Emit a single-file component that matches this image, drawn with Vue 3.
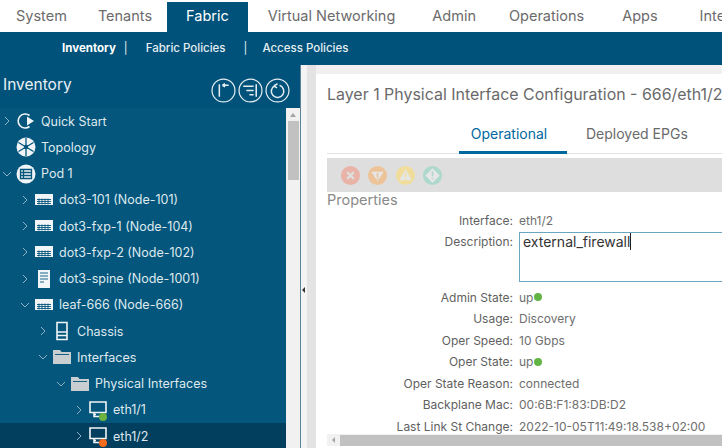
<template>
  <div class="page">
    <nav class="tabs">
      <a v-for="t in tabs" :key="t.name" class="tab" :class="{ active: t.name === 'Fabric' }" :style="{ marginRight: t.gap + 'px' }">{{ t.name }}</a>
    </nav>
    <div class="subnav">
      <a class="sub current">Inventory</a><span class="pipe first">|</span>
      <a class="sub">Fabric Policies</a><span class="pipe">|</span>
      <a class="sub">Access Policies</a>
    </div>

    <div class="main">
      <aside class="sidebar">
        <div class="side-head">
          <span class="side-title">Inventory</span>
          <div class="side-tools">
            <svg viewBox="0 0 24 24" class="tool"><circle cx="12" cy="12" r="11" /><path d="M8 6v12M11 7h6M11 7l2.500-1.500M11 7l2.500 1.500" /></svg>
            <svg viewBox="0 0 24 24" class="tool"><circle cx="12" cy="12" r="11" /><path d="M5 8h10M8 12h7M11 16h4M17.500 6v12" /></svg>
            <svg viewBox="0 0 24 24" class="tool"><circle cx="12" cy="12" r="11" /><path d="M9 7.500a6 6 0 1 0 5-.5M8.500 7.500l3.500-2M8.500 7.500l3 2" /></svg>
          </div>
        </div>
        <div class="side-body">
          <ul class="tree">
            <li v-for="r in rows" :key="r.label" class="row" :class="{ selected: r.selected }" :style="{ paddingLeft: 2 + r.level * 18 + 'px' }">
              <svg viewBox="0 0 10 10" class="chev" :class="{ none: !r.chev }">
                <path v-if="r.chev === 'open'" d="M1 3l4 4 4-4" />
                <path v-else-if="r.chev" d="M3 1l4 4-4 4" />
              </svg>
              <span class="ico">
                <svg v-if="r.icon === 'start'" viewBox="0 0 20 20"><path class="line" d="M13.500 4.500a7 7 0 1 0 0 11" /><path class="fill" d="M11 5.500l7 4.500-7 4.500z" /></svg>
                <svg v-else-if="r.icon === 'topo'" viewBox="0 0 20 20"><circle class="fill" cx="10" cy="10" r="9.500" /><path class="cut" d="M10 1v18M2.500 5.500l15 9M17.500 5.500l-15 9" /><circle class="dot" cx="10" cy="10" r="2.200" /></svg>
                <svg v-else-if="r.icon === 'pod'" viewBox="0 0 20 20"><circle class="fill" cx="10" cy="10" r="9.500" /><path class="cut" d="M4.500 5.500h11v9h-11zM4.500 8.500h11M4.500 11.500h11M7.500 5.500v9" /></svg>
                <svg v-else-if="r.icon === 'leaf'" viewBox="0 0 20 20"><path class="fill" d="M1 4h18v11H1z" /><path class="cut thin" d="M3 9.500h14M3 11.500h14M3 13.500h14M5 8.500v6M8 8.500v6M11 8.500v6M14 8.500v6" /></svg>
                <svg v-else-if="r.icon === 'spine'" viewBox="0 0 20 20"><path class="fill" d="M4 1h12v18H4z" /><path class="cut thin" d="M6 4h8M6 7h8M6 10h8M6 13h4" /></svg>
                <svg v-else-if="r.icon === 'chassis'" viewBox="0 0 20 20"><path class="line" d="M5 1.500h10v17H5zM5 11h10M5 14.500h10" /></svg>
                <svg v-else-if="r.icon === 'folder'" viewBox="0 0 20 20"><path class="folder" d="M1 3h7l1.500 2H19v12H1z" /><path class="cut thin" d="M3 7.500h14" /></svg>
                <svg v-else viewBox="0 0 20 20"><path class="line" d="M2 2h16v10.500H2zM6 12.500v4h5M6 14.500h2" /></svg>
                <i v-if="r.status" class="status" :class="r.status"></i>
              </span>
              <span class="row-label">{{ r.label }}</span>
            </li>
          </ul>
          <div class="vscroll">
            <span class="vup"></span>
            <span class="vthumb"></span>
          </div>
        </div>
      </aside>

      <div class="splitter"><span class="split-arrow"></span></div>

      <section class="panel">
        <h1 class="panel-title">Layer 1 Physical Interface Configuration - 666/eth1/2</h1>
        <div class="panel-tabs">
          <a class="ptab on">Operational</a>
          <a class="ptab">Deployed EPGs</a>
        </div>
        <div class="toolbar">
          <svg viewBox="0 0 22 22" class="fault"><circle cx="11" cy="11" r="10" fill="#e9b3a8" /><path d="M7.500 7.500l7 7M14.500 7.500l-7 7" stroke="#dedede" stroke-width="2.400" /></svg>
          <svg viewBox="0 0 22 22" class="fault"><circle cx="11" cy="11" r="10" fill="#edc39a" /><path d="M4.500 7h13l-6.500 10z" fill="#e6e6e6" /><path d="M11 8.500v4.500M11 14v1.500" stroke="#edc39a" stroke-width="1.600" /></svg>
          <svg viewBox="0 0 22 22" class="fault"><circle cx="11" cy="11" r="10" fill="#f0dd9c" /><path d="M11 4.500l6.500 11.500h-13z" fill="#e6e6e6" /><path d="M11 8v4.500M11 13.500V15" stroke="#f0dd9c" stroke-width="1.600" /></svg>
          <svg viewBox="0 0 22 22" class="fault"><circle cx="11" cy="11" r="10" fill="#aed8ce" /><path d="M11 3.500l7.500 7.500-7.500 7.500-7.500-7.500z" fill="#e6e6e6" /><path d="M11 6.500v5.500M11 13.500V15" stroke="#aed8ce" stroke-width="1.600" /></svg>
        </div>
        <div class="props-title">Properties</div>
        <div class="form">
          <template v-for="f in fields" :key="f.label">
            <label class="flabel">{{ f.label }}:</label>
            <div v-if="f.box" class="fbox"><span class="caret">{{ f.value }}</span></div>
            <div v-else class="fvalue">{{ f.value }}<i v-if="f.up" class="updot"></i></div>
          </template>
        </div>
        <div class="hscroll">
          <span class="hleft"></span>
          <span class="hthumb"></span>
        </div>
      </section>
    </div>
  </div>
</template>

<script setup>
const tabs = [
  { name: 'System', gap: 31 },
  { name: 'Tenants', gap: 15 },
  { name: 'Fabric', gap: 20 },
  { name: 'Virtual Networking', gap: 37 },
  { name: 'Admin', gap: 33 },
  { name: 'Operations', gap: 38 },
  { name: 'Apps', gap: 42 },
  { name: 'Inte', gap: 0 },
]

const rows = [
  { label: 'Quick Start', level: 0, chev: 'closed', icon: 'start' },
  { label: 'Topology', level: 0, icon: 'topo' },
  { label: 'Pod 1', level: 0, chev: 'open', icon: 'pod' },
  { label: 'dot3-101 (Node-101)', level: 1, chev: 'closed', icon: 'leaf' },
  { label: 'dot3-fxp-1 (Node-104)', level: 1, chev: 'closed', icon: 'leaf' },
  { label: 'dot3-fxp-2 (Node-102)', level: 1, chev: 'closed', icon: 'leaf' },
  { label: 'dot3-spine (Node-1001)', level: 1, chev: 'closed', icon: 'spine' },
  { label: 'leaf-666 (Node-666)', level: 1, chev: 'open', icon: 'leaf' },
  { label: 'Chassis', level: 2, chev: 'closed', icon: 'chassis' },
  { label: 'Interfaces', level: 2, chev: 'open', icon: 'folder' },
  { label: 'Physical Interfaces', level: 3, chev: 'open', icon: 'folder' },
  { label: 'eth1/1', level: 4, chev: 'closed', icon: 'port', status: 'ok' },
  { label: 'eth1/2', level: 4, chev: 'closed', icon: 'port', status: 'warn', selected: true },
]

const fields = [
  { label: 'Interface', value: 'eth1/2' },
  { label: 'Description', value: 'external_firewall', box: true },
  { label: 'Admin State', value: 'up', up: true },
  { label: 'Usage', value: 'Discovery' },
  { label: 'Oper Speed', value: '10 Gbps' },
  { label: 'Oper State', value: 'up', up: true },
  { label: 'Oper State Reason', value: 'connected' },
  { label: 'Backplane Mac', value: '00:6B:F1:83:DB:D2' },
  { label: 'Last Link St Change', value: '2022-10-05T11:49:18.538+02:00' },
]
</script>

<style>
html, body {
  margin: 0;
  overflow: hidden;
  background: #fff;
}
</style>

<style scoped>
.page {
  width: 722px;
  height: 448px;
  overflow: hidden;
  display: flex;
  flex-direction: column;
  font-family: Inter, "Noto Sans", sans-serif;
  color: #666;
}

.tabs {
  display: flex;
  height: 32px;
  flex: none;
  padding-left: 16px;
  white-space: nowrap;
  font-size: 14.500px;
}
.tab {
  line-height: 32px;
  color: #6b6b6b;
}
.tab.active {
  background: #00527a;
  color: #fff;
  padding: 0 19px;
  margin-top: 2px;
  line-height: 28px;
}

.subnav {
  height: 33px;
  flex: none;
  box-sizing: border-box;
  padding-bottom: 2px;
  background: #00527a;
  color: #e6eef2;
  display: flex;
  align-items: center;
  padding-left: 62px;
  font-size: 11.500px;
  font-weight: 500;
}
.sub.current {
  font-weight: 700;
  color: #fff;
}
.pipe {
  margin: 0 15px 0 18px;
  font-weight: 400;
}
.pipe.first {
  margin: 0 18px 0 8px;
}

.main {
  flex: 1;
  display: flex;
  min-height: 0;
}

.sidebar {
  width: 300px;
  flex: none;
  display: flex;
  flex-direction: column;
  background: #00527a;
}
.side-head {
  height: 43px;
  flex: none;
  display: flex;
  align-items: flex-start;
  justify-content: space-between;
  padding: 10px 9px 0 3px;
  box-sizing: border-box;
}
.side-title {
  color: #e9f0f4;
  font-size: 15.500px;
  line-height: 20px;
}
.side-tools {
  display: flex;
  gap: 2px;
  margin: 3px 1px 0 0;
}
.tool {
  width: 25px;
  height: 25px;
  fill: none;
  stroke: #e4edf1;
  stroke-width: 1.200;
}
.tool path {
  stroke-width: 1.500;
}

.side-body {
  flex: 1;
  display: flex;
  min-height: 0;
}
.tree {
  flex: 1;
  list-style: none;
  margin: 0;
  padding: 0;
  background: #04567c;
}
.row {
  height: 26.250px;
  display: flex;
  align-items: center;
  box-sizing: border-box;
  color: #dfe9ee;
  font-size: 12.500px;
  white-space: nowrap;
}
.row.selected {
  background: #023f5e;
}
.chev {
  width: 10px;
  height: 10px;
  flex: none;
  margin-right: 4px;
  fill: none;
  stroke: #8fb0c2;
  stroke-width: 1;
}
.chev.none {
  visibility: hidden;
}
.ico {
  position: relative;
  width: 20px;
  height: 20px;
  flex: none;
  margin-right: 5px;
}
.ico svg {
  display: block;
  width: 20px;
  height: 20px;
}
.fill {
  fill: #f1f5f7;
}
.folder {
  fill: #c9ced1;
}
.line {
  fill: none;
  stroke: #f1f5f7;
  stroke-width: 1.600;
}
.cut {
  fill: none;
  stroke: #04567c;
  stroke-width: 1.300;
}
.cut.thin {
  stroke-width: 0.900;
}
.dot {
  fill: #04567c;
}
.status {
  position: absolute;
  right: 1px;
  bottom: -1px;
  width: 8px;
  height: 8px;
  border-radius: 50%;
}
.status.ok {
  background: #6cb33f;
}
.status.warn {
  background: #f26b1d;
}

.vscroll {
  width: 14px;
  flex: none;
  background: #f1f1f1;
  display: flex;
  flex-direction: column;
  align-items: center;
}
.vup {
  margin: 5px 0 4px;
  border: 3px solid transparent;
  border-bottom: 4px solid #a3a3a3;
  border-top: 0;
}
.vthumb {
  width: 11px;
  height: 59px;
  background: #c1c1c1;
}

.splitter {
  width: 16px;
  flex: none;
  box-sizing: border-box;
  border-left: 1px solid #5d8296;
  background: linear-gradient(90deg, #f4f4f4 0 6px, #e3e3e3 6px);
  position: relative;
}
.split-arrow {
  position: absolute;
  left: 1px;
  top: 222px;
  border: 3px solid transparent;
  border-right: 3px solid #333;
  border-left: 0;
}

.panel {
  flex: 1;
  min-width: 0;
  background: #fff;
  margin-top: 9px;
  padding: 10px 0 0 11px;
  box-shadow: 0 -9px 0 #f0f0f0;
  display: flex;
  flex-direction: column;
  overflow: hidden;
  white-space: nowrap;
}
.panel-title {
  margin: 0;
  font-size: 15.950px;
  font-weight: 400;
  line-height: 22px;
  color: #6a6a6a;
}
.panel-tabs {
  height: 48px;
  flex: none;
  box-sizing: border-box;
  padding-top: 16px;
  display: flex;
  border-bottom: 1px solid #e2e2e2;
  font-size: 14px;
  margin-bottom: 4px;
}
.ptab {
  width: 108px;
  height: 32px;
  box-sizing: border-box;
  text-align: center;
  line-height: 24px;
  padding-right: 8px;
  margin-right: 19px;
  color: #6a6a6a;
}
.ptab:first-child {
  margin-left: 132px;
}
.ptab.on {
  color: #00689d;
  border-bottom: 3px solid #00689d;
}
.toolbar {
  height: 34px;
  flex: none;
  background: #dedede;
  display: flex;
  align-items: center;
  padding-left: 13px;
  gap: 6.300px;
}
.fault {
  width: 21px;
  height: 21px;
}
.props-title {
  font-size: 14.500px;
  line-height: 16px;
  color: #8a8a8a;
}
.form {
  flex: 1;
  min-height: 0;
  display: grid;
  grid-template-columns: 186px 1fr;
  grid-template-rows: 21px 55.500px;
  grid-auto-rows: 21.500px;
  column-gap: 6px;
  padding-top: 2px;
  font-size: 12px;
  overflow: hidden;
}
.flabel {
  text-align: right;
  line-height: 21.500px;
  color: #5f5f5f;
}
.fvalue {
  line-height: 21.500px;
  color: #6e6e6e;
  display: flex;
  align-items: center;
}
.fbox {
  height: 50px;
  margin-top: 1px;
  border: 1px solid #6aa6c2;
  box-sizing: border-box;
  width: 230px;
  padding: 0 3px;
  font-size: 14px;
  line-height: 18px;
  color: #333;
}
.caret {
  border-right: 1px solid #222;
}
.updot {
  width: 8px;
  height: 8px;
  margin-left: 1px;
  border-radius: 50%;
  background: #62b446;
}
.hscroll {
  height: 12px;
  flex: none;
  margin-bottom: 2px;
  background: #f1f1f1;
  display: flex;
  align-items: center;
}
.hleft {
  margin: 0 5px;
  border: 3px solid transparent;
  border-right: 3px solid #a3a3a3;
  border-left: 0;
}
.hthumb {
  flex: 1;
  height: 11px;
  background: #c1c1c1;
}
</style>
